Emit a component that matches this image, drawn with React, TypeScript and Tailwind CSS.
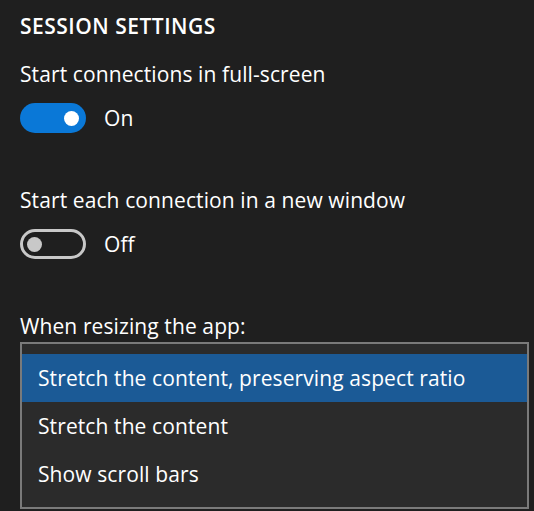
import React from "react";

function ToggleOn() {
  return (
    <div className="flex h-[30px] w-[66px] items-center justify-end rounded-full bg-[#0a78d7] pr-[7px]">
      <div className="h-[15px] w-[15px] rounded-full bg-white" />
    </div>
  );
}

function ToggleOff() {
  return (
    <div className="flex h-[30px] w-[66px] items-center rounded-full border-[3px] border-[#c8c8c8] pl-[4px]">
      <div className="h-[15px] w-[15px] rounded-full bg-[#c8c8c8]" />
    </div>
  );
}

export default function App() {
  const items = [
    "Stretch the content, preserving aspect ratio",
    "Stretch the content",
    "Show scroll bars",
  ];
  return (
    <div
      className="h-[511px] w-[534px] overflow-hidden bg-[#1f1f1f] pl-5 pt-[12px] tracking-[0.1px] text-white"
      style={{ fontFamily: '"Open Sans", "Noto Sans", sans-serif' }}
    >
      <div className="text-[21px] font-semibold leading-[28px] tracking-[0.5px]">SESSION SETTINGS</div>
      <div className="mt-[20px] text-[21px] leading-[28px]">Start connections in full-screen</div>
      <div className="mt-[15px] flex items-center gap-[18px]">
        <ToggleOn />
        <span className="text-[21px] leading-[28px]">On</span>
      </div>
      <div className="mt-[53px] text-[21px] leading-[28px]">Start each connection in a new window</div>
      <div className="mt-[15px] flex items-center gap-[18px]">
        <ToggleOff />
        <span className="text-[21px] leading-[28px]">Off</span>
      </div>
      <div className="mt-[53px] text-[21px] leading-[28px]">When resizing the app:</div>
      <div className="mt-[2px] w-[509px] border-2 border-[#7a7a7a] bg-[#2b2b2b] pb-[9px] pt-[10px]">
        {items.map((t, i) => (
          <div
            key={t}
            className={
              "h-[48px] pl-4 text-[21px] leading-[48px] " + (i === 0 ? "bg-[#1b5a96]" : "")
            }
          >
            {t}
          </div>
        ))}
      </div>
    </div>
  );
}
